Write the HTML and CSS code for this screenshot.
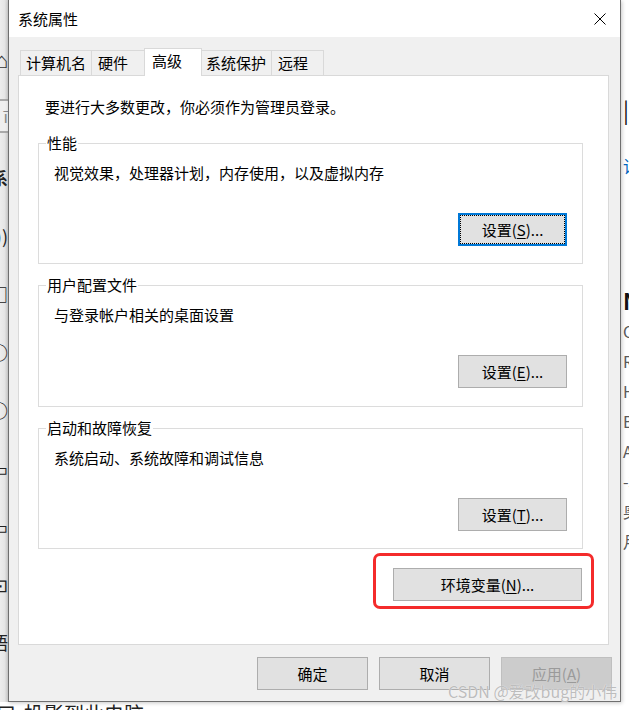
FILE: index.html
```html
<!DOCTYPE html>
<html lang="zh-CN">
<head>
<meta charset="utf-8">
<title>系统属性</title>
<link rel="stylesheet" href="styles.css">
</head>
<body>
<div class="desk">
  <div class="strip-left">
    <div class="lf-home">⌂</div>
    <div class="lf-box">ī</div>
    <div class="lf-list">
      <div class="frag bold">系</div>
      <div class="frag">))</div>
      <div class="frag">□</div>
      <div class="frag">○</div>
      <div class="frag">○</div>
      <div class="frag">▭</div>
      <div class="frag">▭</div>
      <div class="frag">⊡</div>
      <div class="frag">語</div>
    </div>
  </div>

  <div class="dialog">
    <div class="titlebar">
      <span class="title">系统属性</span>
      <svg class="close" width="12" height="12" viewBox="0 0 12 12" aria-hidden="true">
        <path d="M0.5 0.5 L11.5 11.5 M11.5 0.5 L0.5 11.5" stroke="#000" stroke-width="1" fill="none"/>
      </svg>
    </div>
    <div class="dlg-body">
      <div class="tabs">
        <div class="tab t1">计算机名</div>
        <div class="tab t2">硬件</div>
        <div class="tab t3 sel">高级</div>
        <div class="tab t4">系统保护</div>
        <div class="tab t5">远程</div>
      </div>
      <div class="panel">
        <p class="intro">要进行大多数更改，你必须作为管理员登录。</p>
        <div class="group g1">
          <span class="legend">性能</span>
          <p class="gtext">视觉效果，处理器计划，内存使用，以及虚拟内存</p>
          <button class="btn gbtn focus">设置(<u>S</u>)...</button>
        </div>
        <div class="group g2">
          <span class="legend">用户配置文件</span>
          <p class="gtext">与登录帐户相关的桌面设置</p>
          <button class="btn gbtn">设置(<u>E</u>)...</button>
        </div>
        <div class="group g3">
          <span class="legend">启动和故障恢复</span>
          <p class="gtext">系统启动、系统故障和调试信息</p>
          <button class="btn gbtn">设置(<u>T</u>)...</button>
        </div>
        <div class="env-wrap">
          <button class="btn env">环境变量(<u>N</u>)...</button>
          <span class="mark"></span>
        </div>
      </div>
      <div class="actions">
        <button class="btn act">确定</button>
        <button class="btn act">取消</button>
        <button class="btn act disabled">应用(<u>A</u>)</button>
      </div>
    </div>
    <div class="watermark">CSDN @爱改bug的小伟</div>
  </div>

  <div class="strip-right">
    <div class="rf big">|/</div>
    <div class="rf link">详</div>
    <div class="rf head">N</div>
    <div class="rf-list">
      <div class="rf small">C</div>
      <div class="rf small">Ry</div>
      <div class="rf small">H:</div>
      <div class="rf small">B</div>
      <div class="rf small">A</div>
      <div class="rf small">-3</div>
      <div class="rf small">奥</div>
      <div class="rf small">月</div>
    </div>
  </div>

  <div class="strip-bottom">
    <span class="bf-icon">口</span><span class="bf-text">投影到此电脑</span>
  </div>
</div>
</body>
</html>
```

FILE: styles.css
```css
* { box-sizing: border-box; }

body {
  margin: 0;
  width: 629px;
  height: 710px;
  overflow: hidden;
  background: #ffffff;
  font-family: "Noto Sans CJK SC", "Microsoft YaHei", sans-serif;
  font-size: 15px;
  color: #000;
}

.desk {
  display: grid;
  grid-template-columns: 8px 613px 8px;
  grid-template-rows: 702px 8px;
  width: 629px;
  height: 710px;
}

/* ---------- background window fragments (left) ---------- */
.strip-left {
  grid-column: 1;
  grid-row: 1;
  background: linear-gradient(to right, #ededed 0, #e6e6e6 55%, #cfcfcf 100%);
  overflow: hidden;
  display: flex;
  flex-direction: column;
}
.lf-home {
  margin-top: 46px;
  height: 24px;
  line-height: 24px;
  font-size: 22px;
  color: #333;
  display: flex;
  justify-content: flex-end;
  white-space: nowrap;
}
.lf-box {
  margin-top: 29px;
  height: 34px;
  border-top: 2px solid #a9a9a9;
  border-bottom: 2px solid #a9a9a9;
  background: #efefef;
  line-height: 30px;
  font-size: 16px;
  color: #8a8a8a;
  display: flex;
  justify-content: flex-end;
  white-space: nowrap;
}
.lf-list {
  display: flex;
  flex-direction: column;
  margin-top: 30px;
}
.frag {
  height: 30px;
  line-height: 30px;
  font-size: 18px;
  color: #222;
  display: flex;
  justify-content: flex-end;
  white-space: nowrap;
}
.frag + .frag { margin-top: 28px; }
.frag.bold { font-weight: 700; font-size: 17px; }

/* ---------- background window fragments (right) ---------- */
.strip-right {
  grid-column: 3;
  grid-row: 1;
  background: #ffffff;
  overflow: hidden;
  display: flex;
  flex-direction: column;
  padding-left: 2px;
  white-space: nowrap;
}
.rf { white-space: nowrap; }
.rf.big {
  margin-top: 96px;
  height: 26px;
  line-height: 26px;
  font-size: 22px;
  color: #111;
}
.rf.link {
  margin-top: 31px;
  height: 26px;
  line-height: 26px;
  font-size: 17px;
  color: #0067c0;
}
.rf.head {
  margin-top: 108px;
  height: 26px;
  line-height: 26px;
  font-size: 22px;
  font-weight: 700;
  color: #111;
}
.rf-list {
  display: flex;
  flex-direction: column;
  margin-top: 3px;
}
.rf.small {
  height: 30px;
  line-height: 30px;
  font-size: 16px;
  color: #5a5a5a;
}

/* ---------- below the dialog ---------- */
.strip-bottom {
  grid-column: 1 / -1;
  grid-row: 2;
  overflow: hidden;
  background: #fff;
  font-size: 20px;
  line-height: 24px;
  color: #222;
  white-space: nowrap;
  display: flex;
}
.bf-icon { width: 28px; margin-left: -4px; }

/* ---------- dialog ---------- */
.dialog {
  grid-column: 2;
  grid-row: 1;
  position: relative;
  width: 613px;
  height: 702px;
  border: 1px solid #6f6f6f;
  border-top: none;
  background: #f0f0f0;
  box-shadow: 1px 1px 4px rgba(0, 0, 0, 0.22);
  display: flex;
  flex-direction: column;
}

.titlebar {
  height: 37px;
  background: #ffffff;
  display: flex;
  align-items: center;
  justify-content: space-between;
  padding-left: 9px;
  padding-right: 14px;
}
.title {
  font-size: 15px;
  line-height: 20px;
}
.close { display: block; margin-top: 1px; }

.dlg-body {
  flex: 1;
  padding: 11px 0 0 9px;
  display: flex;
  flex-direction: column;
}

.tabs {
  display: flex;
  align-items: flex-end;
  height: 27px;
  padding-left: 2px;
}
.tab {
  height: 25px;
  border: 1px solid #d9d9d9;
  border-bottom: none;
  background: #f0f0f0;
  line-height: 24px;
  padding-left: 5px;
  white-space: nowrap;
  font-size: 15px;
}
.tab + .tab { margin-left: -1px; }
.t1 { width: 72px; }
.t2 { width: 54px; padding-left: 6px; }
.t3 { width: 58px; }
.t4 { width: 71px; padding-left: 4px; }
.t5 { width: 53px; padding-left: 6px; }
.tab.sel {
  position: relative;
  z-index: 1;
  height: 28px;
  margin-bottom: -1px;
  background: #ffffff;
  padding-left: 7px;
}

.panel {
  width: 591px;
  height: 570px;
  border: 1px solid #d9d9d9;
  background: #ffffff;
  padding: 21px 25px 0 19px;
  display: flex;
  flex-direction: column;
}

.intro {
  margin: 0 0 0 7px;
  line-height: 20px;
}

.group {
  position: relative;
  height: 121px;
  border: 1px solid #dcdcdc;
  padding: 19px 15px 0 15px;
  display: flex;
  flex-direction: column;
}
.g1 { margin-top: 26px; }
.g2 { margin-top: 21px; height: 122px; }
.g3 { margin-top: 21px; }

.legend {
  position: absolute;
  left: 7px;
  top: -11px;
  padding: 0 1px;
  background: #ffffff;
  line-height: 20px;
  white-space: nowrap;
}
.gtext {
  margin: 0;
  line-height: 20px;
}

.btn {
  font-family: inherit;
  font-size: 15px;
  color: #000;
  background: #e1e1e1;
  border: 1px solid #adadad;
  border-radius: 0;
  padding: 0;
  margin: 0;
  line-height: 20px;
  text-align: center;
  white-space: nowrap;
}
.btn u { text-underline-offset: 2px; }

.gbtn {
  align-self: flex-end;
  width: 109px;
  height: 33px;
  margin-top: 30px;
}
.btn.focus {
  border: 2px solid #0078d7;
  outline: 1px dotted #000;
  outline-offset: -3px;
}

.env-wrap {
  position: relative;
  align-self: flex-end;
  margin-top: 19px;
  margin-right: 1px;
}
.env {
  display: block;
  width: 189px;
  height: 33px;
}
.mark {
  position: absolute;
  left: -20px;
  top: -15px;
  width: 221px;
  height: 56px;
  border: 3px solid #f42b2b;
  border-radius: 7px;
  pointer-events: none;
}

.actions {
  display: flex;
  justify-content: flex-end;
  gap: 11px;
  margin-top: 12px;
  padding-right: 8px;
}
.act {
  width: 111px;
  height: 33px;
}
.act.disabled {
  background: #cccccc;
  border-color: #bfbfbf;
  color: #9a9a9a;
}

.watermark {
  position: absolute;
  left: 439px;
  top: 681px;
  font-size: 16px;
  line-height: 20px;
  white-space: nowrap;
  color: #bdbdbd;
  text-shadow: 0 0 1px #ffffff;
  pointer-events: none;
}
```
